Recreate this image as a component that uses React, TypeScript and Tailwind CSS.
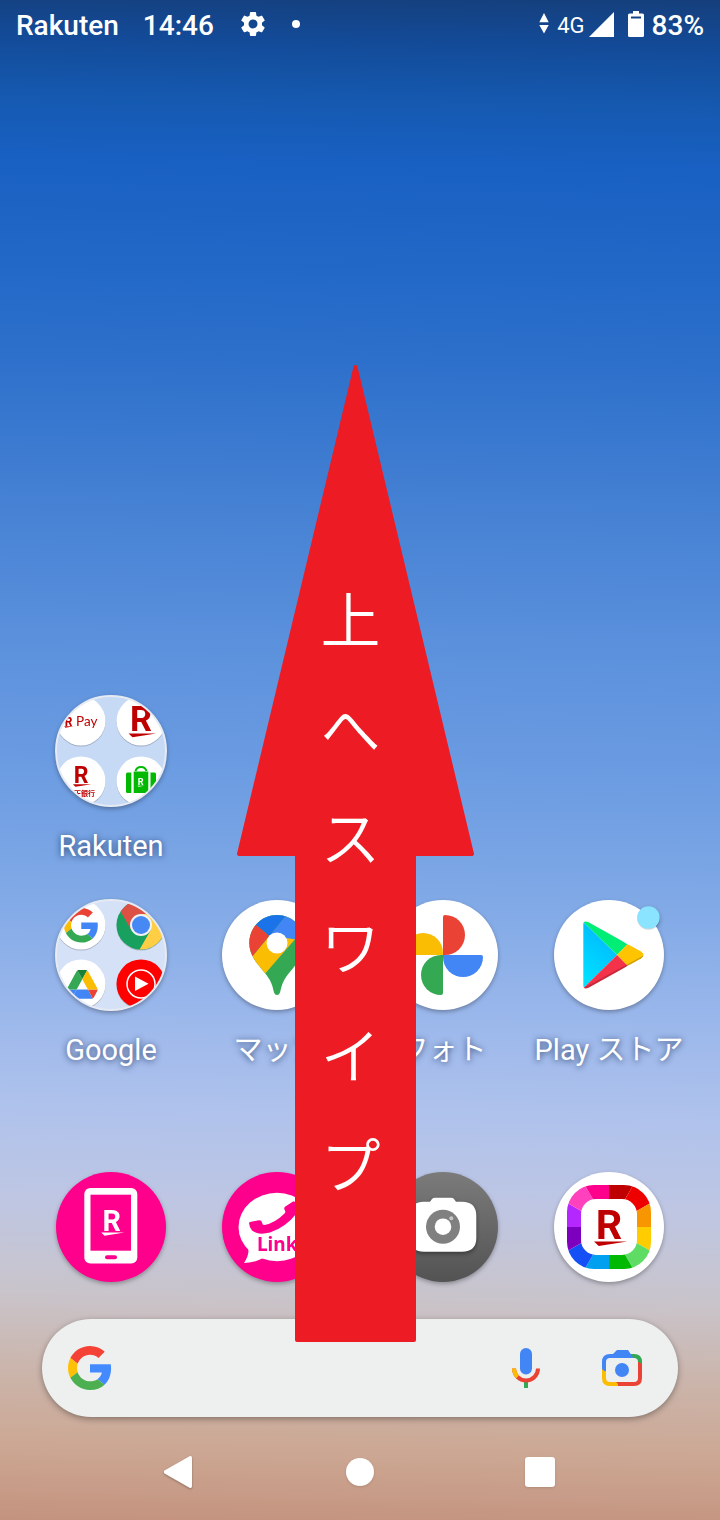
import React from 'react';
import { MdSettings } from 'react-icons/md';

interface RakutenMarkProps {
  x: number;
  y: number;
  height: number;
  color?: string;
}

// "R" with its tapered underline; x/y is the baseline start, height the cap height
const RakutenMark: React.FC<RakutenMarkProps> = ({ x, y, height, color = '#bf0000' }) => (
  <g transform={`translate(${x} ${y}) scale(${height / 100})`} fill={color}>
    <text x="-10" y="0" fontSize="140" fontWeight="700" fontFamily="Roboto, sans-serif">R</text>
    <path d="M-16 10H97L0 25z" />
  </g>
);

interface GoogleGProps {
  red?: string;
  blue?: string;
  yellow?: string;
  green?: string;
}

const GoogleG: React.FC<GoogleGProps> = ({
  red = '#ea4335',
  blue = '#4285f4',
  yellow = '#fbbc05',
  green = '#34a853',
}) => (
  <>
    <path fill={red} d="M24 9.5c3.54 0 6.71 1.22 9.21 3.6l6.85-6.85C35.9 2.38 30.47 0 24 0 14.62 0 6.51 5.38 2.56 13.22l7.98 6.19C12.43 13.72 17.74 9.5 24 9.5z" />
    <path fill={blue} d="M46.98 24.55c0-1.57-.15-3.09-.38-4.55H24v9.02h12.94c-.58 2.96-2.26 5.48-4.78 7.18l7.73 6c4.51-4.18 7.09-10.36 7.09-17.65z" />
    <path fill={yellow} d="M10.53 28.59c-.48-1.45-.76-2.99-.76-4.59s.27-3.14.76-4.59l-7.98-6.19C.92 16.46 0 20.12 0 24c0 3.88.92 7.54 2.56 10.78l7.97-6.19z" />
    <path fill={green} d="M24 48c6.48 0 11.93-2.13 15.89-5.81l-7.73-6c-2.15 1.45-4.92 2.3-8.16 2.3-6.26 0-11.57-4.22-13.47-9.91l-7.98 6.19C6.51 42.62 14.62 48 24 48z" />
  </>
);

const iconClass = 'block size-28 drop-shadow-[0_2px_2px_rgba(0,0,0,0.3)]';

const Folder: React.FC<{ id: string; fill: string; children: React.ReactNode }> = ({ id, fill, children }) => (
  <svg viewBox="0 0 112 112" className={iconClass} aria-hidden="true">
    <clipPath id={id}>
      <circle cx="56" cy="56" r="55" />
    </clipPath>
    <circle cx="56" cy="56" r="55" fill={fill} />
    <g clipPath={`url(#${id})`}>{children}</g>
    <circle cx="56" cy="56" r="55" fill="none" stroke="#e6ebf3" strokeWidth="2" />
  </svg>
);

const MiniDisc: React.FC<{ cx: number; cy: number; fill?: string }> = ({ cx, cy, fill = '#fff' }) => (
  <>
    <circle cx={cx} cy={cy + 1} r="24.5" fill="#000" opacity="0.2" />
    <circle cx={cx} cy={cy} r="24.5" fill={fill} />
  </>
);

const RakutenFolder = () => (
  <Folder id="folder-rakuten" fill="#c6d9f5">
    <MiniDisc cx={26} cy={26} />
    <RakutenMark x={10.5} y={30.5} height={8.5} />
    <text x="21" y="30.5" fontSize="13.5" fontFamily="Lato, sans-serif" fill="#bf0000">Pay</text>
    <MiniDisc cx={86} cy={26} />
    <RakutenMark x={77.5} y={36} height={24.5} />
    <MiniDisc cx={26} cy={86} />
    <RakutenMark x={20.5} y={87.5} height={16.5} />
    <text x="12" y="101" fontSize="7" fontWeight="700" fontFamily="'Noto Sans CJK JP', sans-serif" fill="#bf0000">楽天銀行</text>
    <MiniDisc cx={86} cy={86} />
    <g fill="#00b900">
      <rect x="78.7" y="76.5" width="14.6" height="21.5" />
      <path d="M72.5 77.5H76.3V98H72.5Q71 98 71 96.5V79Q71 77.5 72.5 77.5zM95.5 77.5H99.5Q101 77.5 101 79V96.5Q101 98 99.5 98H95.5z" />
    </g>
    <path d="M80.5 76C82 70.5 90 70.5 91.5 76" fill="none" stroke="#00b900" strokeWidth="2" />
    <RakutenMark x={83.4} y={90} height={6.5} color="#fff" />
  </Folder>
);

const GoogleFolder = () => (
  <Folder id="folder-google" fill="#d5e1f7">
    <MiniDisc cx={26} cy={26} />
    <g transform="translate(9 9) scale(0.72)">
      <GoogleG />
    </g>
    <MiniDisc cx={86} cy={26} fill="#17a05e" />
    <g transform="translate(86 26)">
      <path fill="#dd5144" d="M-20.4-13.5A24.5 24.5 0 0 1 21.9-11L0-11L-9.5 5.5z" />
      <path fill="#ffce44" d="M21.9-11A24.5 24.5 0 0 1-1.4 24.5L9.5 5.5L0-11z" />
      <circle r="11" fill="#f1f1f1" />
      <circle r="9" fill="#4688f4" />
    </g>
    <MiniDisc cx={26} cy={85} />
    <g transform="translate(12 71) scale(0.35 0.37)">
      <path fill="#4285f4" d="m59.8 53h-32.3l-13.75 23.8c1.35.8 2.9 1.2 4.5 1.2h50.8c1.6 0 3.15-.45 4.5-1.2z" />
      <path fill="#4285f4" d="m6.6 66.85 3.85 6.65c.8 1.4 1.95 2.5 3.3 3.3l13.75-23.8h-27.5c0 1.55.4 3.1 1.2 4.5z" />
      <path fill="#34a853" d="m43.65 25-13.75-23.8c-1.35.8-2.5 1.9-3.3 3.3l-25.4 44a9.06 9.06 0 0 0-1.2 4.5h27.5z" />
      <path fill="#ea4335" d="m73.55 76.8c1.35-.8 2.5-1.9 3.3-3.3l1.6-2.75 7.65-13.25c.8-1.4 1.2-2.95 1.2-4.5h-27.5z" />
      <path fill="#188038" d="m43.65 25 13.75-23.8c-1.35-.8-2.9-1.2-4.5-1.2h-18.5c-1.6 0-3.15.45-4.5 1.2z" />
      <path fill="#fbbc04" d="m73.4 26.5-12.7-22c-.8-1.4-1.95-2.5-3.3-3.3l-13.75 23.8 16.15 28h27.45c0-1.55-.4-3.1-1.2-4.5z" />
    </g>
    <MiniDisc cx={86} cy={85} fill="#f00" />
    <circle cx="86" cy="85" r="14" fill="none" stroke="#fff" strokeWidth="1.5" />
    <path d="M80 77.5V92L93.5 84.8z" fill="#fff" />
  </Folder>
);

const Disc: React.FC<{ fill?: string; children: React.ReactNode }> = ({ fill = '#fff', children }) => (
  <svg viewBox="-1 -1 112 112" className={iconClass} aria-hidden="true">
    <circle cx="55" cy="55" r="55" fill={fill} />
    {children}
  </svg>
);

const MapsIcon = () => (
  <Disc>
    <clipPath id="pin">
      <path d="M55 15C39.5 15 27.3 27.5 27.3 43C27.3 49 29 53.5 32 59C36 65.5 43 72 47.5 79.5C50.5 84.5 51 89 52 92.5Q53 95 55 95T58 92.5C59 89 59.5 84.5 62.5 79.5C67 72 74 65.5 78 59C81 53.5 82.7 49 82.7 43C82.7 27.5 70.5 15 55 15z" />
    </clipPath>
    <g clipPath="url(#pin)">
      <rect x="20" y="10" width="70" height="90" fill="#34a853" />
      <path fill="#4285f4" d="M63 16.7L66 10H100V8L55 60L47.3 35.7z" />
      <path fill="#fbbc04" d="M20 69L47.3 35.7L73 39.3L38 79.5z" />
      <path fill="#ea4335" d="M28 20L34.7 25.3L47.3 35.7L26 61.5H20V20z" />
      <path fill="#1a73e8" d="M34.7 25.3L28 19.5V8H70L47.3 35.7z" />
    </g>
    <circle cx="55" cy="43" r="10.5" fill="#fff" />
  </Disc>
);

const PhotosIcon = () => (
  <Disc>
    <path fill="#ea4335" d="M55 55V17q0-2 2-2a20 20 0 0 1 0 40z" />
    <path fill="#4285f4" d="M55 55H93q2 0 2 2a20 20 0 0 1-40 0z" />
    <path fill="#34a853" d="M55 55V93q0 2-2 2a20 20 0 0 1 0-40z" />
    <path fill="#fbbc04" d="M55 55H17q-2 0-2-2a20 20 0 0 1 40 0z" />
  </Disc>
);

const PlayIcon = () => (
  <Disc>
    <defs>
      <linearGradient id="play-blue" x1="0.7" y1="0" x2="0.3" y2="1">
        <stop offset="0" stopColor="#00b4ff" />
        <stop offset="1" stopColor="#00e2ff" />
      </linearGradient>
      <clipPath id="play">
        <path d="M29.3 24Q29.3 20 35 22.5L87 51.5Q92 55 87 58.5L35 87.5Q29.3 90 29.3 86z" />
      </clipPath>
    </defs>
    <g clipPath="url(#play)">
      <path fill="#00ee76" d="M29 20V21.7L63 55L73.5 44.3L35 20z" />
      <path fill="url(#play-blue)" d="M29 21.7L63 55L29 88.5z" />
      <path fill="#ffc400" d="M73.3 44.3L63 55L73.3 65.7L95 58V50z" />
      <path fill="#f43249" d="M63 55L29 88.5V92H40L73.5 65.7z" />
      <path d="M29 89.5L90 56.5" stroke="#000" strokeOpacity="0.18" strokeWidth="2" />
    </g>
    <circle cx="94.5" cy="18.3" r="11.5" fill="#000" opacity="0.15" />
    <circle cx="94.5" cy="17.5" r="11.2" fill="#8ae3ff" />
  </Disc>
);

const MobileIcon = () => (
  <Disc fill="#ff008c">
    <rect x="28.3" y="16" width="53" height="75.5" rx="6" fill="#fff" />
    <rect x="34.5" y="22.7" width="40.5" height="56" fill="#ff008c" />
    <rect x="49" y="83.3" width="12" height="4" rx="2" fill="#ff008c" />
    <RakutenMark x={48.5} y={58.5} height={20.5} color="#fff" />
  </Disc>
);

const LinkIcon = () => (
  <Disc fill="#ff008c">
    <ellipse cx="55" cy="55" rx="38.5" ry="34.2" fill="#fff" />
    <path d="M26.5 76Q27 84 22 91Q33 90.5 41 86z" fill="#fff" />
    <path
      d="M27 51Q27 50 29 49.8L37 48.2Q39.5 48 40 50.5Q40.3 53.2 42.5 53Q53 51 62.5 41.5Q64 39.5 62.5 37.5Q61.5 36 63 34.8L71 29.5Q73 29 74 30.5Q78 36 74 42Q64 55 48 60.5Q36 63.5 30 58.5Q27.5 56 27 51z"
      fill="#ff008c"
    />
    <text x="35" y="79" fontSize="19" fontWeight="700" fontFamily="'Noto Sans', sans-serif" fill="#ff008c">Link</text>
  </Disc>
);

const CameraIcon = () => (
  <Disc fill="url(#camera-bg)">
    <defs>
      <linearGradient id="camera-bg" x1="0" y1="0" x2="0" y2="1">
        <stop offset="0" stopColor="#7b7b7b" />
        <stop offset="1" stopColor="#535353" />
      </linearGradient>
    </defs>
    <g className="drop-shadow-[0_2px_2px_rgba(0,0,0,0.4)]">
      <path d="M36 29.7H42L44 27Q45 25.7 47 25.7H63Q65 25.7 66 27L68 29.7H74Q88.3 29.7 88.3 44V66Q88.3 79.7 74 79.7H36Q21.7 79.7 21.7 66V44Q21.7 29.7 36 29.7z" fill="#fff" />
    </g>
    <circle cx="55" cy="54.7" r="17" fill="#808080" />
    <circle cx="55" cy="54.7" r="8.3" fill="#fff" />
    <circle cx="63.3" cy="46.3" r="2" fill="#c8c8c8" />
  </Disc>
);

// Clockwise from the top
const ringColors = [
  '#bf0000', '#ee0000', '#f79600', '#ffcc00', '#5fdc64', '#00b900',
  '#00a0f0', '#1450f5', '#7d00be', '#b428ff', '#ff41be', '#ff008c',
];

const ringPoint = (i: number): string => {
  const a = (i * Math.PI) / 6;
  return `${55 + 80 * Math.sin(a)} ${55 - 80 * Math.cos(a)}`;
};

const RakutenIcon = () => (
  <Disc>
    <clipPath id="ring">
      <rect x="13" y="13" width="84" height="84" rx="27" />
    </clipPath>
    <g clipPath="url(#ring)">
      {ringColors.map((color, i) => (
        <path key={color} fill={color} d={`M55 55L${ringPoint(i)}L${ringPoint(i + 1)}z`} />
      ))}
    </g>
    <rect x="27" y="27" width="56" height="56" rx="15" fill="#fff" />
    <RakutenMark x={44.7} y={66.5} height={29.5} />
  </Disc>
);

const AppShortcut: React.FC<{ label: string; children: React.ReactNode }> = ({ label, children }) => (
  <button type="button" className="flex flex-col items-center gap-5">
    {children}
    <span className="whitespace-nowrap text-[29px] leading-[38px] text-white [text-shadow:0_1px_6px_rgba(20,40,80,0.8)]">
      {label}
    </span>
  </button>
);

const StatusBar = () => (
  <header className="flex h-12 items-center justify-between px-4 text-[28px] font-medium leading-none text-white">
    <div className="flex items-center gap-6">
      <span className="pt-[3px]">Rakuten</span>
      <span className="pt-[3px]">14:46</span>
      <MdSettings className="size-[30px]" />
      <span className="size-2 rounded-full bg-white" />
    </div>
    <div className="flex items-center gap-2">
      <svg viewBox="0 0 10 22" className="h-[22px] w-[10px]" fill="currentColor" aria-hidden="true">
        <path d="M5 0L9.7 9.3H.3zM5 20.500L9.7 12H.3z" />
      </svg>
      <div className="flex items-center gap-1">
        <span className="pt-[3px] text-[22px] font-normal">4G</span>
        <svg viewBox="0 0 25 25" className="size-[25px]" fill="currentColor" aria-hidden="true">
          <path d="M25 0V25H0z" />
        </svg>
      </div>
      <svg viewBox="0 0 16 26" className="ml-[6px] h-[26px] w-4" aria-hidden="true">
        <path fill="#fff" fillRule="evenodd" d="M5 0H11V2.5H14.5Q16 2.5 16 4V24.5Q16 26 14.5 26H1.5Q0 26 0 24.5V4Q0 2.5 1.5 2.5H5zM3 5.5V7.5H13V5.5z" />
      </svg>
      <span className="pt-[3px]">83%</span>
    </div>
  </header>
);

const SearchBar = () => (
  <form className="mx-[42px] mt-9 flex h-[98px] items-center rounded-full bg-[#eef0f0] pl-[26px] pr-9 shadow-[0_2px_6px_rgba(0,0,0,0.35)]">
    <svg viewBox="0 0 48 48" className="size-11 shrink-0" aria-hidden="true">
      <GoogleG red="#f44336" blue="#448aff" yellow="#ffc107" green="#4caf50" />
    </svg>
    <input type="search" aria-label="Google" className="h-full min-w-0 flex-1 bg-transparent px-4 text-[28px] outline-none" />
    <button type="button" aria-label="音声検索" className="mr-[62px]">
      <svg viewBox="0 0 28 40" className="block h-10 w-7" fill="none">
        <rect x="8" y="0" width="12" height="26.5" rx="6" fill="#4285f4" />
        <path d="M14 33V40" stroke="#34a853" strokeWidth="4" />
        <path d="M2 20.5A12 12 0 0 0 26 20.5" stroke="#ea4335" strokeWidth="4" />
        <path d="M2 20.5A12 12 0 0 0 5.5 29" stroke="#fbbc04" strokeWidth="4" />
      </svg>
    </button>
    <button type="button" aria-label="Google レンズ">
      <svg viewBox="0 0 40 36" className="block h-9 w-10" fill="none">
        <path d="M29 6H32Q38 6 38 12V16" stroke="#34a853" strokeWidth="4" />
        <path d="M38 12V28Q38 34 32 34H15" stroke="#ea4335" strokeWidth="4" />
        <path d="M2 18V28Q2 34 8 34H16" stroke="#fbbc04" strokeWidth="4" />
        <path d="M14 32L18.5 36H24V32z" fill="#ea4335" />
        <path d="M36 10.500V8L38.500 8.500L40 12V15z" fill="#34a853" />
        <path d="M2 21V12Q2 6 8 6H30" stroke="#4285f4" strokeWidth="4" />
        <path d="M0 19L4 22.5V24H0z" fill="#fbbc04" />
        <path d="M11 4L15 0H26L31.5 8H11z" fill="#4285f4" />
        <circle cx="20" cy="20" r="7" fill="#4285f4" />
      </svg>
    </button>
  </form>
);

const NavBar = () => (
  <nav className="mt-[7px] grid h-24 grid-cols-3 items-center justify-items-center px-[90px]">
    <button type="button" aria-label="戻る">
      <svg viewBox="0 0 32 32" className="block size-8 drop-shadow-[0_1px_1px_rgba(0,0,0,0.3)]" fill="#fff">
        <path d="M.5 14.5L25.5.3Q28-.5 28 2V30Q28 32.5 25.5 31.7L.5 17.5Q-1 16 .5 14.5z" />
      </svg>
    </button>
    <button type="button" aria-label="ホーム" className="size-7 rounded-full bg-white shadow-sm" />
    <button type="button" aria-label="最近使ったアプリ" className="size-[30px] rounded-[3px] bg-white shadow-sm" />
  </nav>
);

const swipeText = ['上', 'へ', 'ス', 'ワ', 'イ', 'プ'];

const SwipeArrow = () => (
  <div className="pointer-events-none absolute bottom-[178px] left-1/2 -ml-[123px] h-[977px] w-[237px]">
    <svg viewBox="0 0 237 977" className="absolute inset-0 size-full" aria-hidden="true">
      <path
        d="M118.5 2L235 489H177V975H60V489H2z"
        fill="#ed1c24"
        stroke="#ed1c24"
        strokeWidth="4"
        strokeLinejoin="round"
      />
    </svg>
    <p className="relative flex flex-col items-center pr-[10px] pt-[203px] text-[60px] font-[350] leading-[109px] text-white">
      {swipeText.map((char) => (
        <span key={char}>{char}</span>
      ))}
    </p>
  </div>
);

export default function App() {
  return (
    <div className="relative flex min-h-screen flex-col overflow-hidden bg-[linear-gradient(181deg,#153f7c_0%,#134a97_3%,#1559b0_7%,#1860c2_11%,#2067c6_17%,#2d70cb_24%,#4480d3_33%,#5a90dc_42%,#6c9ce2_51%,#80a9e6_59%,#98b6eb_66%,#afc2ec_73%,#bec6e3_79%,#c9c4cb_85%,#cbb5ac_90%,#cca894_95%,#c4937f_100%)] font-['Roboto','Noto_Sans_CJK_JP',sans-serif]">
      <StatusBar />
      <main className="mt-auto grid grid-cols-4 gap-y-[34px] px-7">
        <AppShortcut label="Rakuten"><RakutenFolder /></AppShortcut>
        <div className="col-span-3" />
        <AppShortcut label="Google"><GoogleFolder /></AppShortcut>
        <AppShortcut label="マップ"><MapsIcon /></AppShortcut>
        <AppShortcut label="フォト"><PhotosIcon /></AppShortcut>
        <AppShortcut label="Play ストア"><PlayIcon /></AppShortcut>
      </main>
      <div className="mt-[102px] grid grid-cols-4 justify-items-center px-7">
        <button type="button" aria-label="my 楽天モバイル"><MobileIcon /></button>
        <button type="button" aria-label="Rakuten Link"><LinkIcon /></button>
        <button type="button" aria-label="カメラ"><CameraIcon /></button>
        <button type="button" aria-label="Rakuten"><RakutenIcon /></button>
      </div>
      <SearchBar />
      <NavBar />
      <SwipeArrow />
    </div>
  );
}
